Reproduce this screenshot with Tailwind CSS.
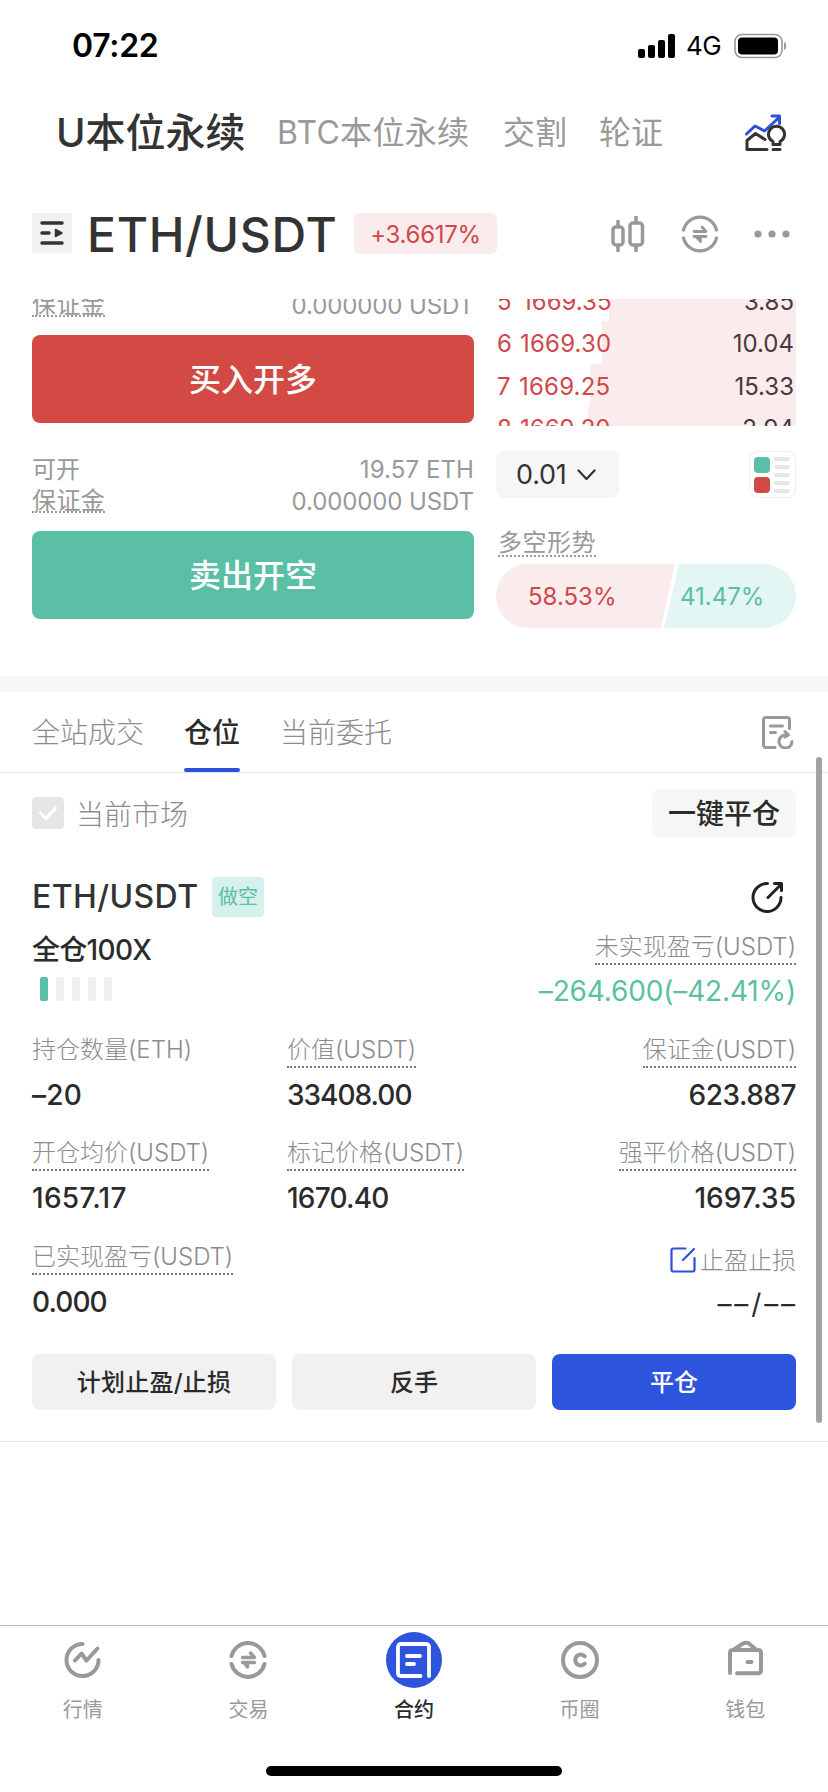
<!DOCTYPE html>
<html lang="zh-CN">
<head>
<meta charset="utf-8">
<title>ETH/USDT</title>
<script src="https://cdn.jsdelivr.net/npm/@tailwindcss/browser@4"></script>
</head>
<body class="bg-white">
<div class="w-[828px] h-[1792px] relative overflow-hidden bg-white flex flex-col font-['Inter','Noto_Sans_CJK_SC',sans-serif] text-[#333] whitespace-nowrap">

  <!-- status bar -->
  <div class="h-[91px] shrink-0 flex items-center justify-between pl-[72px] pr-10">
    <span class="text-[32px] leading-10 font-semibold text-black tracking-[-0.3px]">07:22</span>
    <div class="flex items-center text-black">
      <svg width="37" height="24" viewBox="0 0 37 24" fill="#000"><rect x="0" y="15" width="7" height="9" rx="2"/><rect x="10" y="11" width="7" height="13" rx="2"/><rect x="20" y="6" width="7" height="18" rx="2"/><rect x="30" y="0" width="7" height="24" rx="2"/></svg>
      <span class="ml-[11px] w-[38px] text-[26px] leading-8 tracking-[-0.5px]">4G</span>
      <svg class="ml-[10px]" width="54" height="26" viewBox="0 0 54 26"><rect x="1" y="1.5" width="47" height="23" rx="7" fill="none" stroke="#999" stroke-width="1.6"/><rect x="4" y="4.500" width="40" height="17" rx="4" fill="#000"/><path d="M50 9v8c3-1 3-7 0-8z" fill="#999"/></svg>
    </div>
  </div>

  <!-- product tabs -->
  <div class="h-[83px] shrink-0 flex items-center pl-14 pr-[42px] text-[32px] leading-10 text-[#999]">
    <span class="w-[221px] text-[40px] font-medium text-[#333]">U本位永续</span>
    <span class="w-[226px] tracking-[0.3px]">BTC本位永续</span>
    <span class="w-24">交割</span>
    <span>轮证</span>
    <svg class="ml-auto" width="42" height="42" viewBox="0 0 42 42" fill="none" stroke-width="3" stroke-linecap="round" stroke-linejoin="round"><path d="M2.500 22L11 14l9.500 5L35 5.500M28 4h7.500v7.500" stroke="#2e4fdb"/><path d="M23 37.500H3V28.500l8.500-7 9.500 6M29 32.500v-3a8 8 0 1 1 7 0v3zM29 37.500h7" stroke="#333"/></svg>
  </div>

  <!-- pair header -->
  <div class="h-[125px] shrink-0 flex items-start pt-[39px] pl-8 pr-[38px]">
    <div class="size-10 bg-[#f1f1f1] flex items-center justify-center">
      <svg width="24" height="26" viewBox="0 0 24 26" fill="none" stroke="#333" stroke-width="3.400" stroke-linecap="round"><path d="M2 3h20M2 13h7M2 23h20"/><path d="M15.500 9.500l6.500 3.500-6.500 3.500z" fill="#333" stroke-width="1.500" stroke-linejoin="round"/></svg>
    </div>
    <span class="ml-[15px] w-[267px] text-[48px] leading-[43px] font-medium tracking-[0.7px]">ETH/USDT</span>
    <span class="w-[143px] h-[41px] rounded-md bg-[#faecec] text-[#d2474a] text-2xl leading-[43px] text-center tracking-[-0.3px]">+3.6617%</span>
    <div class="ml-auto flex items-center h-[41px]">
      <svg width="36" height="40" viewBox="0 0 36 40" fill="none" stroke="#999" stroke-width="3.500"><rect x="3" y="13" width="10" height="18" rx="3"/><rect x="20" y="9" width="12.500" height="22" rx="3"/><path d="M8 6v7M8 31v7M26 2v7M26 31v7"/></svg>
      <svg class="ml-[35px]" width="38" height="38" viewBox="0 0 38 38" fill="none" stroke="#999" stroke-width="3.200" stroke-linecap="round"><path d="M2.500 15a17 17 0 0 1 33 0M2.500 23a17 17 0 0 0 33 0"/><path d="M13 16.500h12l-4-4.500M25 21.500H13M19.500 22v4.500l-4-4.500" stroke-width="2.800" stroke-linejoin="round"/></svg>
      <svg class="ml-[35px]" width="36" height="8" viewBox="0 0 36 8" fill="#999"><circle cx="4" cy="4" r="3.600"/><circle cx="18" cy="4" r="3.600"/><circle cx="32" cy="4" r="3.600"/></svg>
    </div>
  </div>

  <!-- order form and order book -->
  <div class="h-[377px] shrink-0 overflow-hidden flex pl-8 pr-8 gap-[22px]">
    <div class="w-[442px] text-2xl text-[#999]">
      <div class="h-9 flex items-start justify-between">
        <span class="-mt-[11px] h-[29px] border-b-2 border-dotted border-[#999] leading-[34px] tracking-[0.4px]">保证金</span>
        <span class="-mt-[11px] leading-[35px] tracking-[-0.1px]">0.000000 USDT</span>
      </div>
      <div class="h-22 rounded-lg bg-[#d34944] text-white text-[32px] leading-[90px] text-center font-medium">买入开多</div>
      <div class="h-[31px] mt-[31px] flex justify-between leading-[32px]"><span>可开</span><span class="tracking-[0.1px]">19.57 ETH</span></div>
      <div class="h-[46px] flex items-start justify-between">
        <span class="h-[28px] border-b-2 border-dotted border-[#999] leading-[31px] tracking-[0.4px]">保证金</span>
        <span class="leading-[34px] tracking-[-0.1px]">0.000000 USDT</span>
      </div>
      <div class="h-22 rounded-lg bg-[#5abfa5] text-white text-[32px] leading-[90px] text-center font-medium">卖出开空</div>
    </div>

    <div class="w-[300px] text-2xl">
      <div class="h-[127px] overflow-hidden text-[#d2474a]">
        <div class="-mt-5 h-[42px] flex justify-end"><div class="w-[187px] bg-[#faecec]"></div><div class="-ml-[300px] w-[300px] pl-px pr-[2px] flex leading-[45px]"><span class="w-[25px]">5</span><span>1669.35</span><span class="ml-auto text-[#483a3a]">3.85</span></div></div>
        <div class="h-[43px] flex justify-end"><div class="w-[194px] bg-[#faecec]"></div><div class="-ml-[300px] w-[300px] pl-px pr-[2px] flex leading-[45px]"><span class="w-[23px]">6</span><span class="tracking-[0.2px]">1669.30</span><span class="ml-auto text-[#483a3a]">10.04</span></div></div>
        <div class="h-[42px] flex justify-end"><div class="w-[206px] bg-[#faecec]"></div><div class="-ml-[300px] w-[300px] pl-px pr-[2px] flex leading-[45px]"><span class="w-[22px]">7</span><span class="tracking-[0.2px]">1669.25</span><span class="ml-auto text-[#483a3a]">15.33</span></div></div>
        <div class="h-[43px] flex justify-end"><div class="w-[208px] bg-[#faecec]"></div><div class="-ml-[300px] w-[300px] pl-px pr-[2px] flex leading-[46px]"><span class="w-[23px]">8</span><span>1669.20</span><span class="ml-auto text-[#483a3a]">2.94</span></div></div>
      </div>
      <div class="mt-[25px] h-[47px] flex justify-between">
        <div class="w-[123px] rounded-lg bg-[#f6f6f6] flex items-center pl-5 text-[27px]"><span class="w-[61px] tracking-[-0.2px]">0.01</span>
          <svg width="19" height="12" viewBox="0 0 19 12" fill="none" stroke="#333" stroke-width="2.200" stroke-linecap="round" stroke-linejoin="round"><path d="M1.500 1.500l8 8.500 8-8.500"/></svg></div>
        <div class="w-[47px] rounded-lg border border-[#eee] flex items-center pl-1 gap-1">
          <div class="flex flex-col gap-1"><div class="size-4 rounded bg-[#5abfa5]"></div><div class="size-4 rounded bg-[#d34944]"></div></div>
          <div class="flex flex-col gap-1"><div class="w-4 h-1 rounded-full bg-[#e6e6e6]"></div><div class="w-4 h-1 rounded-full bg-[#e6e6e6]"></div><div class="w-4 h-1 rounded-full bg-[#e6e6e6]"></div><div class="w-4 h-1 rounded-full bg-[#e6e6e6]"></div><div class="w-4 h-1 rounded-full bg-[#e6e6e6]"></div></div>
        </div>
      </div>
      <div class="mt-[28px] h-[38px] flex pl-[2px]"><span class="h-[31px] border-b-2 border-dotted border-[#999] text-[#999] leading-[33px] tracking-[0.5px]">多空形势</span></div>
      <div class="h-16 rounded-full overflow-hidden flex leading-[65px]">
        <div class="w-[179px] shrink-0 bg-[#faecec] text-[#d2474a] pl-8 [clip-path:polygon(0_0,100%_0,165px_100%,0_100%)]">58.53%</div>
        <div class="-ml-[11px] grow bg-[#e3f6f3] text-[#5abfa5] pl-4 [clip-path:polygon(15px_0,100%_0,100%_100%,0_100%)]">41.47%</div>
      </div>
    </div>
  </div>

  <div class="h-4 shrink-0 bg-[#f6f6f6]"></div>

  <!-- position tabs -->
  <div class="h-[81px] shrink-0 border-b border-[#e5e5e5] flex items-stretch pl-8 pr-[34px] gap-10 text-[28px] leading-[82px] text-[#8c8c8c]">
    <span class="font-light">全站成交</span>
    <div class="flex flex-col text-[#2b2b2b]"><span class="h-[76px] font-medium">仓位</span><span class="h-1 rounded-full bg-[#2e4fdb]"></span></div>
    <span class="font-light">当前委托</span>
    <svg class="ml-auto mt-[23px]" width="34" height="34" viewBox="0 0 34 34" fill="none" stroke="#999" stroke-width="3" stroke-linecap="round" stroke-linejoin="round"><path d="M29.500 13.500V5q0-2.500-2.500-2.500H6Q3.500 2.500 3.500 5v25q0 2.500 2.500 2.500h9M10.500 11h12M10.500 17.500h5"/><path d="M32 26.500a6.500 6.500 0 1 1-4.500-6.200M25 16.500l3.500 3.500-3.500 2"/></svg>
  </div>

  <!-- market filter -->
  <div class="h-[80px] shrink-0 flex items-center px-8 text-[28px]">
    <div class="size-8 rounded bg-[#e6e6e6] flex items-center justify-center"><svg width="20" height="16" viewBox="0 0 20 16" fill="none" stroke="#fff" stroke-width="3"><path d="M1.500 7l6.500 6.500L18.500 2"/></svg></div>
    <span class="ml-3 pt-[3px] font-light text-[#8c8c8c]">当前市场</span>
    <span class="ml-auto w-36 h-12 rounded-lg bg-[#f6f6f6] leading-[51px] text-center text-[#2b2b2b] font-medium">一键平仓</span>
  </div>

  <!-- position card -->
  <div class="h-[589px] shrink-0 border-b border-[#e8e8e8] px-8 pt-6 flex flex-col">
    <div class="h-10 flex items-center">
      <span class="w-[180px] text-[32px] font-medium tracking-[0.4px]">ETH/USDT</span>
      <span class="w-[52px] h-10 rounded bg-[#d6f0ec] text-[#5abfa5] text-xl leading-[41px] text-center">做空</span>
      <svg class="ml-auto mr-[12px]" width="34" height="34" viewBox="0 0 34 34" fill="none" stroke="#222" stroke-width="3" stroke-linecap="round" stroke-linejoin="round"><path d="M17.500 3.500A14 14 0 1 0 31 17.500M18 17.500L31 4.500M24.500 3.500H31.500v7"/></svg>
    </div>
    <div class="mt-3 h-[101px] flex justify-between">
      <div class="flex flex-col">
        <span class="h-12 text-[28px] leading-[42px] tracking-[-0.7px] font-medium text-[#2b2b2b]">全仓100X</span>
        <div class="pl-2 flex gap-2"><i class="w-2 h-6 rounded-xs bg-[#5abfa5]"></i><i class="w-2 h-6 rounded-xs bg-[#f0f0f0]"></i><i class="w-2 h-6 rounded-xs bg-[#f0f0f0]"></i><i class="w-2 h-6 rounded-xs bg-[#f0f0f0]"></i><i class="w-2 h-6 rounded-xs bg-[#f0f0f0]"></i></div>
      </div>
      <div class="flex flex-col items-end">
        <span class="h-9 border-b-2 border-dotted border-[#777] text-2xl leading-[36px] font-light text-[#8c8c8c]">未实现盈亏(USDT)</span>
        <span class="mt-[8px] text-[28px] leading-[37px] tracking-[-0.15px] text-[#5abfa5]">–264.600(–42.41%)</span>
      </div>
    </div>
    <div class="grid grid-cols-[255px_255px_1fr] auto-rows-[103.3px] text-2xl">
      <div class="flex flex-col items-start"><span class="h-[38px] leading-[40px] font-light text-[#8c8c8c]">持仓数量(ETH)</span><span class="mt-2 text-[28px] leading-[38px] font-medium text-[#2b2b2b] tracking-[0.2px]">–20</span></div>
      <div class="flex flex-col items-start"><span class="h-[38px] border-b-2 border-dotted border-[#777] leading-[40px] font-light text-[#8c8c8c]">价值(USDT)</span><span class="mt-2 text-[28px] leading-[38px] font-medium text-[#2b2b2b] tracking-[-1px]">33408.00</span></div>
      <div class="flex flex-col items-end"><span class="h-[38px] border-b-2 border-dotted border-[#777] leading-[40px] font-light text-[#8c8c8c]">保证金(USDT)</span><span class="mt-2 text-[28px] leading-[38px] font-medium text-[#2b2b2b] tracking-[-0.5px]">623.887</span></div>
      <div class="flex flex-col items-start"><span class="h-[38px] border-b-2 border-dotted border-[#777] leading-[40px] font-light text-[#8c8c8c]">开仓均价(USDT)</span><span class="mt-2 text-[28px] leading-[38px] font-medium text-[#2b2b2b] tracking-[0.3px]">1657.17</span></div>
      <div class="flex flex-col items-start"><span class="h-[38px] border-b-2 border-dotted border-[#777] leading-[40px] font-light text-[#8c8c8c]">标记价格(USDT)</span><span class="mt-2 text-[28px] leading-[38px] font-medium text-[#2b2b2b] tracking-[-0.8px]">1670.40</span></div>
      <div class="flex flex-col items-end"><span class="h-[38px] border-b-2 border-dotted border-[#777] leading-[40px] font-light text-[#8c8c8c]">强平价格(USDT)</span><span class="mt-2 text-[28px] leading-[38px] font-medium text-[#2b2b2b]">1697.35</span></div>
      <div class="flex flex-col items-start"><span class="h-[38px] border-b-2 border-dotted border-[#777] leading-[40px] font-light text-[#8c8c8c]">已实现盈亏(USDT)</span><span class="mt-2 text-[28px] leading-[38px] font-medium text-[#2b2b2b] tracking-[-0.9px]">0.000</span></div>
      <div></div>
      <div class="flex flex-col items-end pt-1">
        <div class="h-[38px] flex items-center gap-1 font-light text-[#8c8c8c]">
          <svg width="26" height="26" viewBox="0 0 26 26" fill="none" stroke="#2e4fdb" stroke-width="2.200" stroke-linecap="round" stroke-linejoin="round"><path d="M15.500 1.500H3.500q-2 0-2 2v19q0 2 2 2h19q2 0 2-2V11M13 13L24 2"/></svg>
          <span class="pt-[2px]">止盈止损</span>
        </div>
        <span class="mt-[7px] -mr-[2px] text-[28px] leading-[37px] tracking-[2.900px] text-[#2b2b2b]">––/––</span>
      </div>
    </div>
    <div class="mt-[14px] h-14 shrink-0 flex gap-4 text-2xl leading-[58px] text-center text-[#2b2b2b]">
      <div class="flex-1 rounded-lg bg-[#f1f1f1] font-medium tracking-[0.2px]">计划止盈/止损</div>
      <div class="flex-1 rounded-lg bg-[#f1f1f1] font-medium">反手</div>
      <div class="flex-1 rounded-lg bg-[#2e54de] text-white font-medium">平仓</div>
    </div>
  </div>

  <div class="grow"></div>

  <!-- bottom navigation -->
  <div class="h-[167px] shrink-0 border-t border-[#bfbfbf] flex flex-col items-center">
    <div class="w-full h-[140px] grid grid-cols-5 text-xl leading-[32px] text-[#999]">
      <div class="flex flex-col items-center"><div class="h-[68px] flex items-center"><svg width="40" height="40" viewBox="0 0 40 40" fill="none" stroke="#999" stroke-width="4" stroke-linecap="round" stroke-linejoin="round"><path d="M19.500 4A16 16 0 1 0 35.500 20M12 20.500l6.500-7 5 7L34.500 8.500"/></svg></div><span>行情</span></div>
      <div class="flex flex-col items-center"><div class="h-[68px] flex items-center"><svg width="40" height="40" viewBox="0 0 40 40" fill="none" stroke="#999" stroke-width="4" stroke-linecap="round"><path d="M3.500 16a17 17 0 0 1 33 0M3.500 24a17 17 0 0 0 33 0"/><path d="M14.500 17.500h12l-4-4.500M26.500 22.500h-12M19.500 23v4l-3-4" stroke-width="3.400" stroke-linejoin="round"/></svg></div><span>交易</span></div>
      <div class="flex flex-col items-center text-[#2b2b2b]"><div class="h-[68px] flex items-center"><div class="size-14 rounded-full bg-[#2e54de] flex items-center justify-center"><svg width="36" height="36" viewBox="0 0 36 36" fill="none" stroke="#fff" stroke-width="3.800" stroke-linecap="round" stroke-linejoin="round"><path d="M33 34V5q0-3-3-3H5Q2 2 2 5v26q0 3 3 3h19.500M11 14h13M11 22h7"/></svg></div></div><span class="font-medium">合约</span></div>
      <div class="flex flex-col items-center"><div class="h-[68px] flex items-center"><svg width="40" height="40" viewBox="0 0 40 40" fill="none" stroke="#999" stroke-width="4" stroke-linecap="round"><circle cx="20" cy="20" r="17"/><path d="M24.800 16.300a5.500 5.500 0 1 0 0 7.400"/></svg></div><span>币圈</span></div>
      <div class="flex flex-col items-center"><div class="h-[68px] flex items-center"><svg width="40" height="40" viewBox="0 0 40 40" fill="none" stroke="#999" stroke-width="4" stroke-linecap="round" stroke-linejoin="round"><path d="M5 33V13q0-3 3-3h25q3 0 3 3v17q0 3.300-3 3.300H12M9 9.500l9-6q3-1.500 6 0l7 6M22.500 22h4"/></svg></div><span>钱包</span></div>
    </div>
    <div class="w-[296px] h-[10px] rounded-full bg-black"></div>
  </div>

  <!-- scroll indicator -->
  <div class="absolute left-[816px] top-[757px] w-[6px] h-[666px] rounded-full bg-[#a3a3a3]"></div>
</div>
</body>
</html>
